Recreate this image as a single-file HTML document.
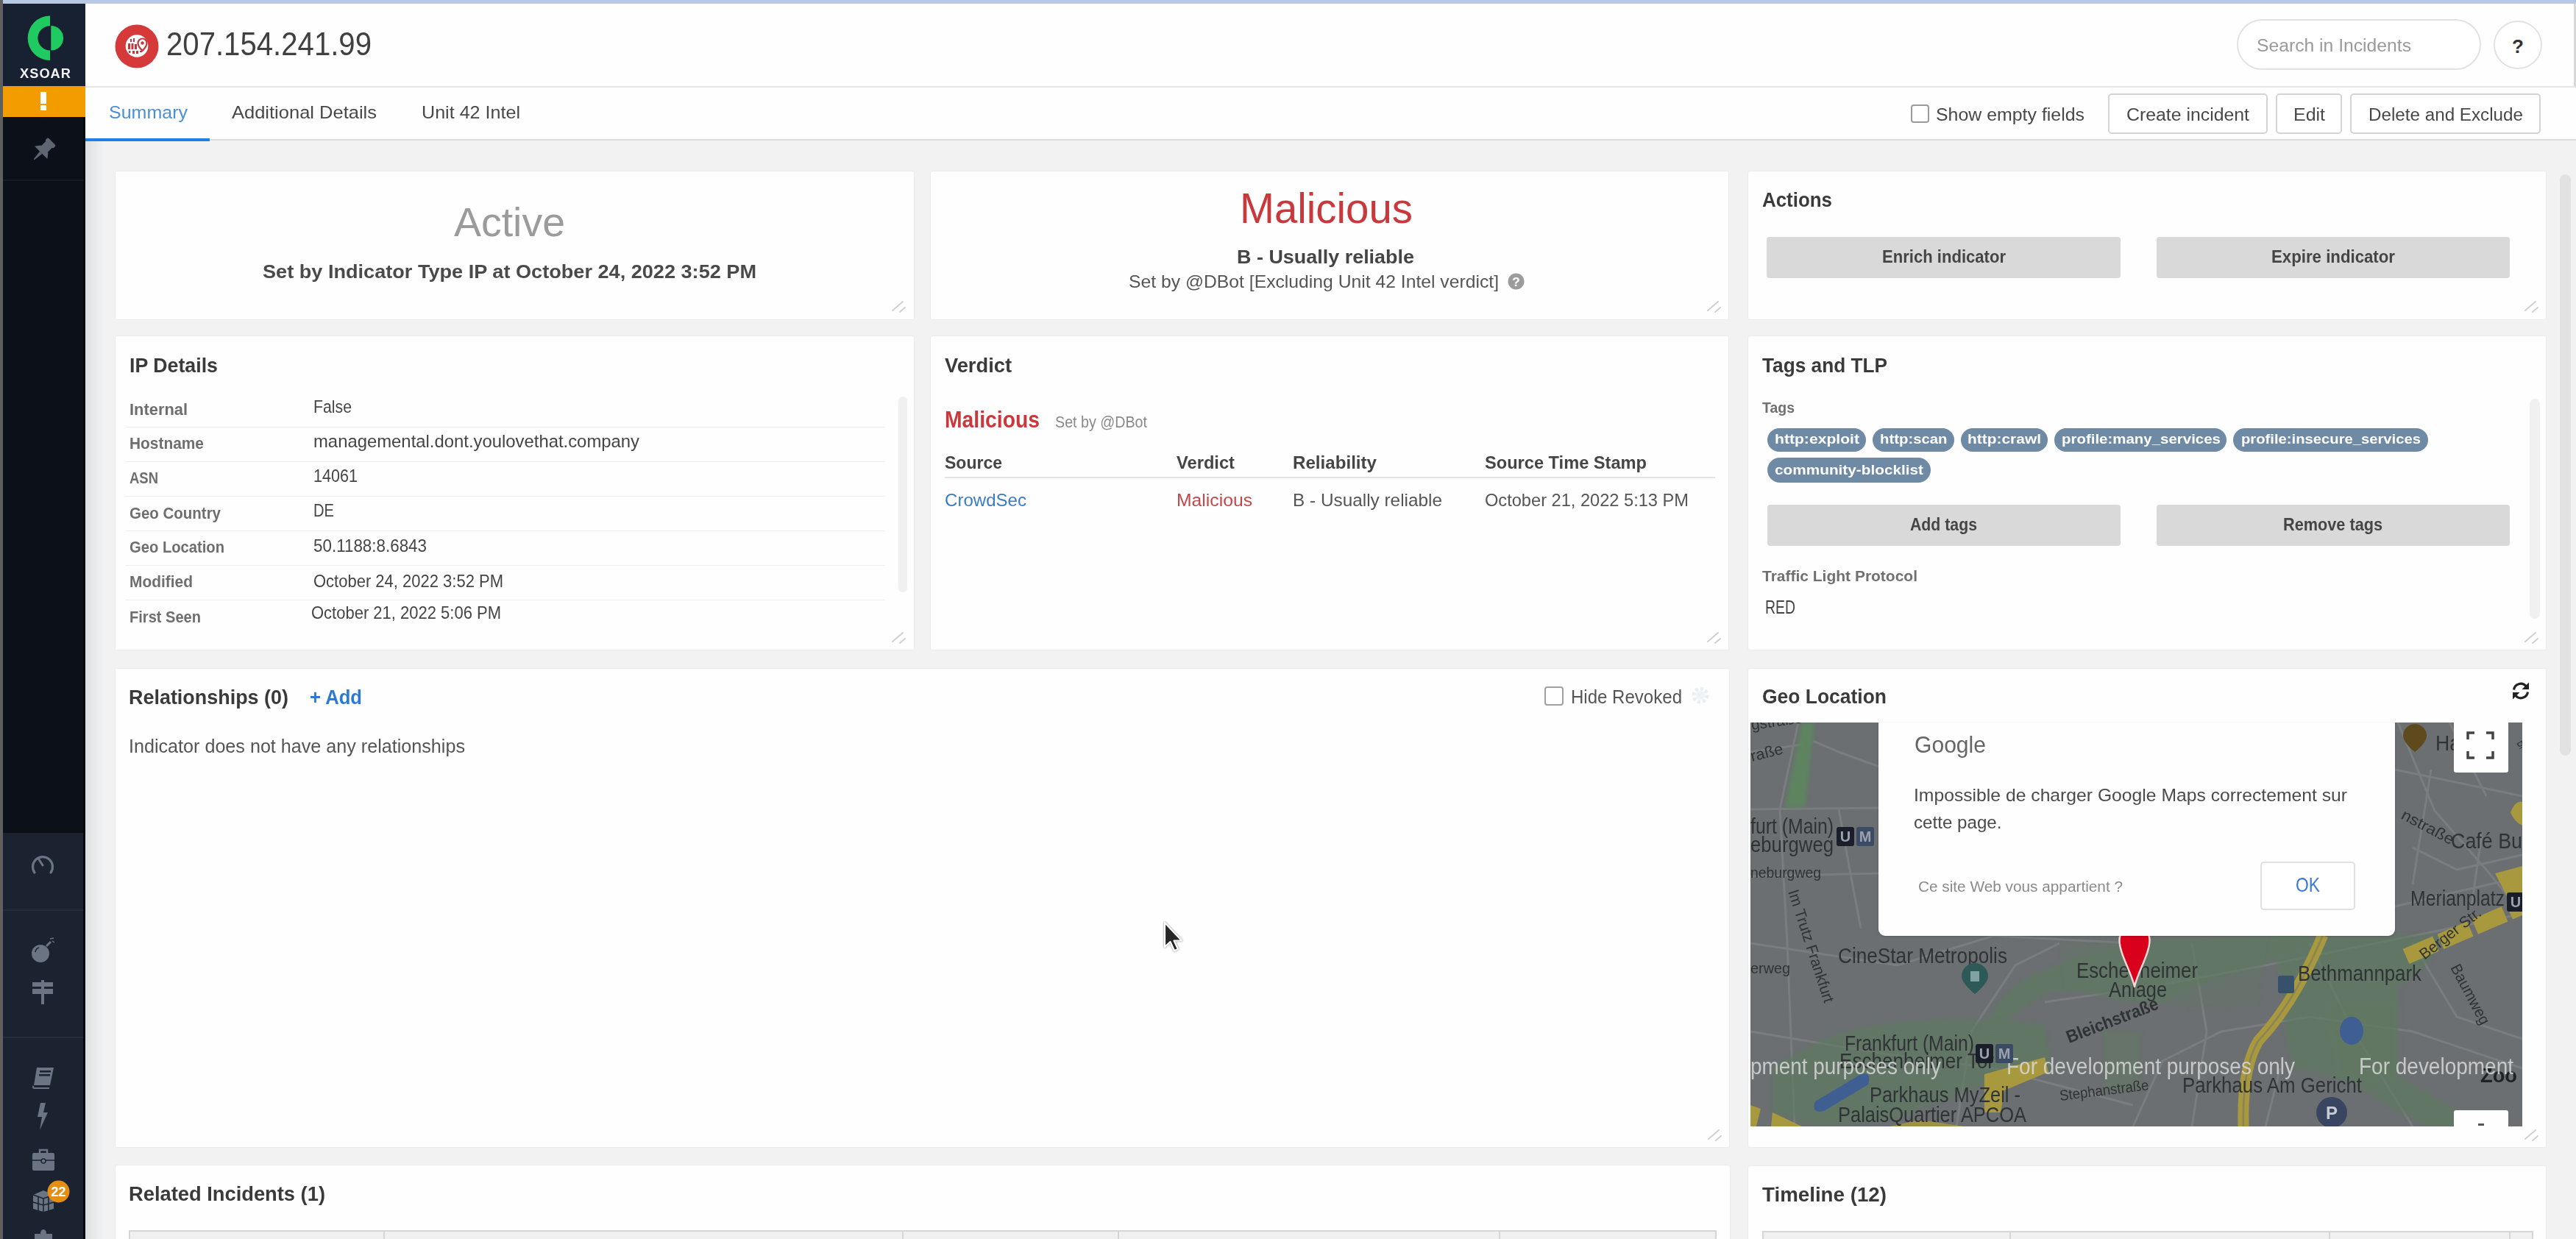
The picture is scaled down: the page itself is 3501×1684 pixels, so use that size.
<!DOCTYPE html>
<html><head><meta charset="utf-8">
<style>
html,body{margin:0;padding:0;}
body{width:3501px;height:1684px;overflow:hidden;position:relative;background:#f2f2f2;font-family:"Liberation Sans",sans-serif;}
.a{position:absolute;}
.tx{position:absolute;white-space:nowrap;line-height:1;transform-origin:0 0;font-family:"Liberation Sans",sans-serif;}
.card{position:absolute;background:#fefefe;border:1px solid #ececec;box-sizing:border-box;border-radius:3px;}
.btn{position:absolute;background:#fff;border:2px solid #d4d4d4;box-sizing:border-box;border-radius:5px;}
.gbtn{position:absolute;background:#d9d9d9;border-radius:4px;}
.pill{position:absolute;background:#6f8aa5;border-radius:17px;color:#fff;font-weight:700;white-space:nowrap;line-height:1;}
.rh{position:absolute;width:14px;height:14px;}
.sep{position:absolute;height:1px;background:#efefef;}
</style></head><body>
<!-- frame -->
<div class="a" style="left:0;top:0;width:4px;height:1684px;background:#5f5f5f"></div>
<div class="a" style="left:4px;top:0;width:3497px;height:5px;background:#b7c8e2"></div>
<!-- sidebar -->
<div class="a" style="left:4px;top:5px;width:112px;height:112px;background:#172131"></div>
<div class="a" style="left:4px;top:117px;width:112px;height:42px;background:#f29c00"></div>
<div class="a" style="left:4px;top:159px;width:112px;height:973px;background:#0c1119"></div>
<div class="a" style="left:4px;top:244px;width:112px;height:2px;background:#161c26"></div>
<div class="a" style="left:4px;top:1132px;width:112px;height:552px;background:#1b2331"></div>
<div class="a" style="left:4px;top:1236px;width:112px;height:2px;background:#252d3b"></div>
<div class="a" style="left:4px;top:1409px;width:112px;height:2px;background:#252d3b"></div>
<div class="a" style="left:116px;top:191px;width:24px;height:1493px;background:linear-gradient(to right,#dcdfe2,#f2f2f2)"></div>
<div class="a" style="left:113px;top:159px;width:3px;height:1525px;background:#05080c"></div>
<!-- header -->
<div class="a" style="left:116px;top:5px;width:3383px;height:112px;background:#fefefe"></div>
<div class="a" style="left:3498px;top:5px;width:3px;height:113px;background:#d8d8d8"></div>
<div class="a" style="left:116px;top:117px;width:3385px;height:2px;background:#e6e6e6"></div>
<div class="a" style="left:116px;top:119px;width:3385px;height:70px;background:#fefefe"></div>
<div class="a" style="left:116px;top:189px;width:3385px;height:2px;background:#dcdcdc"></div>
<div class="a" style="left:116px;top:188px;width:169px;height:4px;background:#1d80e2"></div>
<!-- search -->
<div class="a" style="left:3040px;top:26px;width:332px;height:69px;border:2px solid #e2e2e2;border-radius:36px;box-sizing:border-box;background:#fff"></div>
<div class="a" style="left:3389px;top:28px;width:66px;height:66px;border:2px solid #e2e2e2;border-radius:50%;box-sizing:border-box;background:#fff"></div>
<!-- checkbox show empty -->
<div class="a" style="left:2597px;top:142px;width:25px;height:25px;border:2px solid #9a9a9a;border-radius:4px;box-sizing:border-box;background:#fff"></div>
<div class="btn" style="left:2865px;top:127px;width:217px;height:55px"></div>
<div class="btn" style="left:3093px;top:127px;width:90px;height:55px"></div>
<div class="btn" style="left:3194px;top:127px;width:259px;height:55px"></div>
<!-- page scrollbar -->
<div class="a" style="left:3479px;top:237px;width:15px;height:790px;background:#e2e2e2;border-radius:8px"></div>
<!-- cards -->
<div class="card" style="left:156px;top:232px;width:1087px;height:203px"></div>
<div class="card" style="left:1264px;top:232px;width:1086px;height:203px"></div>
<div class="card" style="left:2375px;top:232px;width:1086px;height:203px"></div>
<div class="card" style="left:156px;top:456px;width:1087px;height:428px"></div>
<div class="card" style="left:1264px;top:456px;width:1086px;height:428px"></div>
<div class="card" style="left:2375px;top:456px;width:1086px;height:428px"></div>
<div class="card" style="left:156px;top:908px;width:2195px;height:652px"></div>
<div class="card" style="left:2375px;top:908px;width:1086px;height:652px"></div>
<div class="card" style="left:156px;top:1583px;width:2196px;height:120px"></div>
<div class="card" style="left:2375px;top:1584px;width:1086px;height:120px"></div>
<!-- action buttons -->
<div class="gbtn" style="left:2401px;top:322px;width:481px;height:56px"></div>
<div class="gbtn" style="left:2931px;top:322px;width:480px;height:56px"></div>
<div class="gbtn" style="left:2402px;top:686px;width:480px;height:56px"></div>
<div class="gbtn" style="left:2931px;top:686px;width:480px;height:56px"></div>
<!-- ip details separators -->
<div class="sep" style="left:170px;top:580px;width:1033px"></div>
<div class="sep" style="left:170px;top:627px;width:1033px"></div>
<div class="sep" style="left:170px;top:674px;width:1033px"></div>
<div class="sep" style="left:170px;top:721px;width:1033px"></div>
<div class="sep" style="left:170px;top:768px;width:1033px"></div>
<div class="sep" style="left:170px;top:815px;width:1033px"></div>
<div class="a" style="left:1221px;top:539px;width:12px;height:266px;background:#f0f0f0;border-radius:6px"></div>
<!-- verdict table line -->
<div class="a" style="left:1284px;top:648px;width:1047px;height:2px;background:#e4e4e4"></div>
<!-- tags scrollbar -->
<div class="a" style="left:3438px;top:542px;width:14px;height:299px;background:#f0f0f0;border-radius:7px"></div>
<!-- relationships checkbox -->
<div class="a" style="left:2099px;top:933px;width:26px;height:26px;border:2px solid #a0a0a0;border-radius:4px;box-sizing:border-box;background:#fff"></div>
<div class="a" style="left:55px;top:125px;width:8px;height:16px;background:#fff"></div><div class="a" style="left:55px;top:143px;width:8px;height:7px;background:#fff"></div>
<svg class="a" style="left:30px;top:15px" width="70" height="75" viewBox="0 0 70 75">
<path d="M38 6.5 A30.3 30.3 0 0 0 38 67.1 L38 53.4 A16.6 16.6 0 0 1 38 20.2 Z" fill="#1fcb60"/>
<path d="M39.3 20 A16.8 16.8 0 0 1 39.3 53.6 Z" fill="#1fcb60"/>
</svg>
<svg class="a" style="left:156px;top:33px" width="60" height="60" viewBox="0 0 60 60">
<circle cx="30" cy="30" r="29.5" fill="#d5393a"/>
<circle cx="30" cy="29.5" r="15.3" fill="#fff"/>
<g fill="#c9363a">
<rect x="18" y="26" width="3" height="8"/><rect x="22.5" y="26" width="3" height="8"/><rect x="27" y="27" width="3" height="7"/>
<rect x="21" y="20" width="2" height="4"/><rect x="25" y="19" width="2" height="5"/>
<rect x="19" y="36" width="2.5" height="3"/><rect x="24" y="36" width="3" height="4"/><rect x="29" y="36" width="3" height="4"/><rect x="34" y="36" width="3" height="2"/>
</g>
<path d="M37.5 19.5 a6 6 0 0 1 6 6 c0 4.5 -6 10.5 -6 10.5 c0 0 -6 -6 -6 -10.5 a6 6 0 0 1 6 -6 z" fill="#fff" stroke="#c9363a" stroke-width="2.2"/>
<circle cx="37.5" cy="25.5" r="2.2" fill="#c9363a"/>
</svg>
<svg class="a" style="left:38px;top:185px" width="40" height="40" viewBox="0 0 36 36">
<g fill="#5f6672" transform="rotate(45 18 18)">
<rect x="11" y="2" width="14" height="5" rx="1.5"/>
<rect x="12.5" y="6" width="11" height="10"/>
<path d="M7 21 L11.5 15 H24.5 L29 21 Z"/>
<path d="M16 21 H20 L18.6 33 H17.4 Z"/>
</g></svg>

<svg class="a" style="left:40px;top:1158px" width="36" height="32" viewBox="0 0 36 32">
<path d="M7 28 A13.5 13.5 0 1 1 29 28" stroke="#6a7483" stroke-width="3.2" fill="none" stroke-linecap="round"/>
<path d="M12.5 9.5 L18 18" stroke="#6a7483" stroke-width="3" stroke-linecap="round"/>
</svg>
<svg class="a" style="left:40px;top:1272px" width="36" height="38" viewBox="0 0 36 38">
<circle cx="15" cy="24" r="12" fill="#6a7483"/>
<path d="M23 14 L29 8" stroke="#6a7483" stroke-width="3"/>
<path d="M28 4 L33 3 M31 7 L34 9" stroke="#6a7483" stroke-width="1.5"/>
<path d="M8 22 A7 7 0 0 1 13 16" stroke="#1b2331" stroke-width="1.5" fill="none"/>
</svg>
<svg class="a" style="left:42px;top:1332px" width="32" height="34" viewBox="0 0 32 34">
<rect x="2" y="3" width="28" height="6" fill="#6a7483"/>
<rect x="2" y="12" width="28" height="7" fill="#6a7483"/>
<rect x="14" y="0" width="4" height="33" fill="#6a7483"/>
</svg>
<svg class="a" style="left:42px;top:1449px" width="34" height="32" viewBox="0 0 34 32">
<path d="M8 2 H31 L26 26 H4 Z" fill="#6a7483"/>
<path d="M3.5 27 Q2 30 5 30 H25" stroke="#6a7483" stroke-width="2.2" fill="none"/>
<rect x="12" y="6" width="15" height="2.5" fill="#1b2331"/>
<rect x="11" y="11" width="15" height="2.5" fill="#1b2331"/>
</svg>
<svg class="a" style="left:48px;top:1498px" width="20" height="40" viewBox="0 0 20 40">
<path d="M7 1 H14 L11 14 H17 L6 38 L9 20 H3 Z" fill="#6a7483"/>
</svg>
<svg class="a" style="left:43px;top:1560px" width="32" height="32" viewBox="0 0 32 32">
<path d="M11 7 V3 H21 V7" stroke="#6a7483" stroke-width="2.5" fill="none"/>
<rect x="1" y="7" width="30" height="24" rx="2" fill="#6a7483"/>
<path d="M1 17 H31" stroke="#1b2331" stroke-width="1.5"/>
<circle cx="16" cy="18" r="3" fill="#6a7483" stroke="#1b2331" stroke-width="1.5"/>
</svg>
<svg class="a" style="left:43px;top:1616px" width="32" height="32" viewBox="0 0 32 32">
<path d="M2 8 L16 2 L30 8 V27 L16 31 L2 27 Z" fill="#6a7483"/>
<path d="M2 8 L16 13 L30 8 M16 13 V31 M2 18 L16 22 L30 18 M9 10 V29 M23 10 V29" stroke="#1b2331" stroke-width="1.6" fill="none"/>
</svg>
<svg class="a" style="left:64px;top:1604px" width="31" height="31" viewBox="0 0 31 31">
<circle cx="15.5" cy="15.5" r="15" fill="#e48f12"/>
<text x="15.5" y="22" font-family="Liberation Sans" font-size="18" font-weight="700" fill="#fff" text-anchor="middle">22</text>
</svg>
<svg class="a" style="left:45px;top:1671px" width="28" height="14" viewBox="0 0 28 14">
<path d="M2 6 H10 Q10 0 14 0 Q18 0 18 6 H26 V14 H2 Z" fill="#6a7483"/>
</svg>


<svg class="a" style="left:3408px;top:49px" width="28" height="28" viewBox="0 0 28 28">
<text x="14" y="23" font-family="Liberation Sans" font-size="26" font-weight="700" fill="#333" text-anchor="middle">?</text>
</svg>
<svg class="a" style="left:2049px;top:371px" width="23" height="23" viewBox="0 0 23 23">
<circle cx="11.5" cy="11.5" r="11" fill="#9c9c9c"/>
<text x="11.5" y="18" font-family="Liberation Sans" font-size="17" font-weight="700" fill="#fff" text-anchor="middle">?</text>
</svg>
<svg class="a" style="left:3412px;top:925px" width="28" height="28" viewBox="0 0 28 28">
<path d="M4.5 12.5 A9.5 9.5 0 0 1 21 7.5" stroke="#222" stroke-width="3.2" fill="none"/>
<path d="M25 2.5 V12 H15.5 Z" fill="#222"/>
<path d="M23.5 15.5 A9.5 9.5 0 0 1 7 20.5" stroke="#222" stroke-width="3.2" fill="none"/>
<path d="M3 25.5 V16 H12.5 Z" fill="#222"/>
</svg>
<svg class="a" style="left:2297px;top:931px" width="28" height="28" viewBox="0 0 28 28">
<circle cx="14" cy="14" r="9" fill="none" stroke="#e8eef5" stroke-width="5" stroke-dasharray="4 3"/>
<circle cx="14" cy="14" r="6" fill="#eef3f8"/>
</svg>

<svg class="a" style="left:1208px;top:400px" width="34" height="34" viewBox="0 0 34 34"><path d="M5 22 L19 10 M15 24 L22 18" stroke="#d0d0d0" stroke-width="2" stroke-linecap="round"/></svg>
<svg class="a" style="left:2316px;top:400px" width="34" height="34" viewBox="0 0 34 34"><path d="M5 22 L19 10 M15 24 L22 18" stroke="#d0d0d0" stroke-width="2" stroke-linecap="round"/></svg>
<svg class="a" style="left:3427px;top:400px" width="34" height="34" viewBox="0 0 34 34"><path d="M5 22 L19 10 M15 24 L22 18" stroke="#d0d0d0" stroke-width="2" stroke-linecap="round"/></svg>
<svg class="a" style="left:1208px;top:850px" width="34" height="34" viewBox="0 0 34 34"><path d="M5 22 L19 10 M15 24 L22 18" stroke="#d0d0d0" stroke-width="2" stroke-linecap="round"/></svg>
<svg class="a" style="left:2316px;top:850px" width="34" height="34" viewBox="0 0 34 34"><path d="M5 22 L19 10 M15 24 L22 18" stroke="#d0d0d0" stroke-width="2" stroke-linecap="round"/></svg>
<svg class="a" style="left:3427px;top:850px" width="34" height="34" viewBox="0 0 34 34"><path d="M5 22 L19 10 M15 24 L22 18" stroke="#d0d0d0" stroke-width="2" stroke-linecap="round"/></svg>
<svg class="a" style="left:2317px;top:1526px" width="34" height="34" viewBox="0 0 34 34"><path d="M5 22 L19 10 M15 24 L22 18" stroke="#d0d0d0" stroke-width="2" stroke-linecap="round"/></svg>
<svg class="a" style="left:3427px;top:1526px" width="34" height="34" viewBox="0 0 34 34"><path d="M5 22 L19 10 M15 24 L22 18" stroke="#d0d0d0" stroke-width="2" stroke-linecap="round"/></svg>

<div class="a" style="left:175px;top:1673px;width:2157px;height:11px;background:#f0f0f0"></div>
<div class="a" style="left:2395px;top:1674px;width:1047px;height:10px;background:#f0f0f0"></div>
<div class="a" style="left:175px;top:1672px;width:2157px;height:2px;background:#d6d6d6"></div>
<div class="a" style="left:175px;top:1672px;width:2px;height:14px;background:#d6d6d6"></div>
<div class="a" style="left:521px;top:1672px;width:2px;height:14px;background:#d6d6d6"></div>
<div class="a" style="left:1226px;top:1672px;width:2px;height:14px;background:#d6d6d6"></div>
<div class="a" style="left:1519px;top:1672px;width:2px;height:14px;background:#d6d6d6"></div>
<div class="a" style="left:2037px;top:1672px;width:2px;height:14px;background:#d6d6d6"></div>
<div class="a" style="left:2331px;top:1672px;width:2px;height:14px;background:#d6d6d6"></div>
<div class="a" style="left:2395px;top:1673px;width:1047px;height:2px;background:#d6d6d6"></div>
<div class="a" style="left:2395px;top:1673px;width:2px;height:14px;background:#d6d6d6"></div>
<div class="a" style="left:2731px;top:1673px;width:2px;height:14px;background:#d6d6d6"></div>
<div class="a" style="left:3165px;top:1673px;width:2px;height:14px;background:#d6d6d6"></div>
<div class="a" style="left:3410px;top:1673px;width:2px;height:14px;background:#d6d6d6"></div>
<div class="a" style="left:3441px;top:1673px;width:2px;height:14px;background:#d6d6d6"></div>

<div class="pill" style="left:2402px;top:582px;width:134px;height:32px"></div>
<div class="pill" style="left:2545px;top:582px;width:111px;height:32px"></div>
<div class="pill" style="left:2665px;top:582px;width:118px;height:32px"></div>
<div class="pill" style="left:2792px;top:582px;width:234px;height:32px"></div>
<div class="pill" style="left:3035px;top:582px;width:265px;height:32px"></div>
<div class="pill" style="left:2402px;top:622px;width:222px;height:34px"></div>
<svg class="a" style="left:2379px;top:982px" width="1049" height="549" viewBox="0 0 1049 549">
<rect width="1049" height="549" fill="#6b6f71"/>
<path d="M65 0 L40 118 L50 300 L60 549" stroke="#7a7d80" stroke-width="3" fill="none"/>
<path d="M0 118 L175 116" stroke="#7a7d80" stroke-width="3" fill="none"/>
<path d="M85 25 L120 40 L175 60" stroke="#7a7d80" stroke-width="3" fill="none"/>
<path d="M0 40 L70 30" stroke="#7a7d80" stroke-width="3" fill="none"/>
<path d="M0 209 L175 205" stroke="#7a7d80" stroke-width="3" fill="none"/>
<path d="M0 300 L200 330 L330 290 L520 300" stroke="#7a7d80" stroke-width="3" fill="none"/>
<path d="M120 118 L135 200 L150 280" stroke="#7a7d80" stroke-width="3" fill="none"/>
<path d="M0 420 L180 450 L330 470 L520 520" stroke="#7a7d80" stroke-width="3" fill="none"/>
<path d="M280 549 L300 420 L360 330 L420 300" stroke="#7a7d80" stroke-width="3" fill="none"/>
<path d="M400 380 L540 360 L700 330 L900 290 L1049 260" stroke="#7a7d80" stroke-width="3" fill="none"/>
<path d="M520 549 L560 460 L640 420 L760 400 L900 420 L1049 470" stroke="#7a7d80" stroke-width="3" fill="none"/>
<path d="M880 0 L930 120 L1000 200 L1049 260" stroke="#7a7d80" stroke-width="3" fill="none"/>
<path d="M876 64 L1049 100" stroke="#7a7d80" stroke-width="3" fill="none"/>
<path d="M925 64 L900 220" stroke="#7a7d80" stroke-width="3" fill="none"/>
<path d="M994 150 L980 250" stroke="#7a7d80" stroke-width="3" fill="none"/>
<path d="M900 300 L960 400 L1049 430" stroke="#7a7d80" stroke-width="3" fill="none"/>
<path d="M950 0 L1000 100" stroke="#7a7d80" stroke-width="3" fill="none"/>
<path d="M700 549 L720 470" stroke="#7a7d80" stroke-width="3" fill="none"/>
<path d="M600 300 L620 420 L600 549" stroke="#7a7d80" stroke-width="3" fill="none"/>
<path d="M760 300 L820 420 L900 549" stroke="#7a7d80" stroke-width="3" fill="none"/>
<path d="M876 250 L960 230 L1049 210" stroke="#7a7d80" stroke-width="3" fill="none"/>
<path d="M1049 180 L960 200 L900 170" stroke="#7a7d80" stroke-width="3" fill="none"/>
<defs><filter id="bl" x="-5%" y="-5%" width="110%" height="110%"><feGaussianBlur stdDeviation="2.5"/></filter></defs>
<g filter="url(#bl)" opacity="0.8">
<path d="M70 0 L87 0 L74 115 L47 115 Z" fill="#5a8a5c"/>
<path d="M315 420 Q330 380 370 350 Q420 325 470 312 Q520 300 560 296 L700 289 L760 289 L745 310 Q700 330 660 340 Q600 360 560 380 Q520 384 470 370 Q430 360 400 370 Q360 390 340 420 Z" fill="#5f7a60" opacity="0.8"/>
<path d="M420 300 L700 289 L690 384 Q620 390 560 384 Q500 380 430 360 Z" fill="#5f7a60" opacity="0.35"/>
<path d="M705 289 L940 289 Q930 330 880 360 L880 480 Q930 510 1000 549 L920 549 Q860 520 820 490 L740 470 Q720 420 725 360 Z" fill="#5f7a60" opacity="0.85"/>
<path d="M780 380 L880 380 L880 485 L800 485 Z" fill="#5f7a60"/>
<path d="M30 470 Q100 420 180 410 Q260 400 330 405 L400 410 L410 470 Q340 480 300 500 Q240 520 200 540 L90 549 L30 530 Z" fill="#5f7a60" opacity="0.8"/>
<path d="M480 420 L530 420 L530 500 L480 500 Z" fill="#5f7a60" opacity="0.6"/>
</g>
<ellipse cx="817" cy="419" rx="16" ry="19" fill="#3f5f92"/>
<path d="M88 515 L150 478 Q165 474 160 492 L100 528 Q82 532 88 515 Z" fill="#3f5f92"/>
<path d="M778 289 Q740 380 690 433 Q668 470 670 549" stroke="#a8983e" stroke-width="15" fill="none"/>
<path d="M778 289 Q740 380 690 433 Q668 470 670 549" stroke="#6b6f71" stroke-width="2.5" fill="none" opacity="0.5"/>
<path d="M891 318 L1049 250" stroke="#a8983e" stroke-width="22" stroke-dasharray="44 7" fill="none"/>
<path d="M1012 205 L1049 195 L1049 250 L1030 240 Z M1033 122 Q1040 105 1049 108 L1049 140 Q1038 135 1033 122 Z" fill="#a8983e"/>
<path d="M0 520 L14 525 L8 549 L0 549 Z M30 530 L70 549 L28 549 Z" fill="#a8983e"/>
<path d="M318 478 L400 455 L405 475 L345 500 L340 530 L318 530 Z" fill="#a8983e"/>
<path d="M190 549 L230 540 L290 549 Z" fill="#a8983e" opacity="0.85"/>
<text x="0.0" y="151.0" font-family="Liberation Sans" font-size="30.0" font-weight="400" fill="#2f3335" opacity="1.00" textLength="113.0" lengthAdjust="spacingAndGlyphs">furt (Main)</text>
<text x="0.0" y="176.0" font-family="Liberation Sans" font-size="30.0" font-weight="400" fill="#2f3335" opacity="1.00" textLength="113.0" lengthAdjust="spacingAndGlyphs">eburgweg</text>
<text x="0.0" y="211.0" font-family="Liberation Sans" font-size="21.0" font-weight="400" fill="#2f3335" opacity="1.00" textLength="96.0" lengthAdjust="spacingAndGlyphs">neburgweg</text>
<text x="2.0" y="53.0" font-family="Liberation Sans" font-size="21.0" font-weight="400" fill="#2f3335" opacity="1.00" textLength="45.0" lengthAdjust="spacingAndGlyphs" transform="rotate(-14.0 2.0 53.0)">raße</text>
<text x="2.0" y="10.0" font-family="Liberation Sans" font-size="21.0" font-weight="400" fill="#2f3335" opacity="1.00" textLength="70.0" lengthAdjust="spacingAndGlyphs" transform="rotate(-8.0 2.0 10.0)">gstraße</text>
<text x="0.0" y="341.0" font-family="Liberation Sans" font-size="21.0" font-weight="400" fill="#2f3335" opacity="1.00" textLength="54.0" lengthAdjust="spacingAndGlyphs">erweg</text>
<text x="51.0" y="230.0" font-family="Liberation Sans" font-size="21.0" font-weight="400" fill="#2f3335" opacity="1.00" textLength="160.0" lengthAdjust="spacingAndGlyphs" transform="rotate(72.0 51.0 230.0)">Im Trutz Frankfurt</text>
<text x="119.0" y="327.0" font-family="Liberation Sans" font-size="30.0" font-weight="400" fill="#2f3335" opacity="1.00" textLength="230.0" lengthAdjust="spacingAndGlyphs">CineStar Metropolis</text>
<text x="443.0" y="347.0" font-family="Liberation Sans" font-size="30.0" font-weight="400" fill="#2f3335" opacity="1.00" textLength="165.0" lengthAdjust="spacingAndGlyphs">Eschenheimer</text>
<text x="487.0" y="373.0" font-family="Liberation Sans" font-size="30.0" font-weight="400" fill="#2f3335" opacity="1.00" textLength="79.0" lengthAdjust="spacingAndGlyphs">Anlage</text>
<text x="433.0" y="436.0" font-family="Liberation Sans" font-size="24.0" font-weight="700" fill="#2f3335" opacity="1.00" textLength="132.0" lengthAdjust="spacingAndGlyphs" transform="rotate(-21.0 433.0 436.0)">Bleichstraße</text>
<text x="128.0" y="446.0" font-family="Liberation Sans" font-size="30.0" font-weight="400" fill="#2f3335" opacity="1.00" textLength="176.0" lengthAdjust="spacingAndGlyphs">Frankfurt (Main)</text>
<text x="121.0" y="470.0" font-family="Liberation Sans" font-size="30.0" font-weight="400" fill="#2f3335" opacity="1.00" textLength="210.0" lengthAdjust="spacingAndGlyphs">Eschenheimer Tor</text>
<text x="162.0" y="516.0" font-family="Liberation Sans" font-size="30.0" font-weight="400" fill="#2f3335" opacity="1.00" textLength="205.0" lengthAdjust="spacingAndGlyphs">Parkhaus MyZeil -</text>
<text x="119.0" y="543.0" font-family="Liberation Sans" font-size="30.0" font-weight="400" fill="#2f3335" opacity="1.00" textLength="256.0" lengthAdjust="spacingAndGlyphs">PalaisQuartier APCOA</text>
<text x="421.0" y="514.0" font-family="Liberation Sans" font-size="20.0" font-weight="400" fill="#2f3335" opacity="1.00" textLength="122.0" lengthAdjust="spacingAndGlyphs" transform="rotate(-7.0 421.0 514.0)">Stephanstraße</text>
<text x="587.0" y="503.0" font-family="Liberation Sans" font-size="30.0" font-weight="400" fill="#2f3335" opacity="1.00" textLength="244.0" lengthAdjust="spacingAndGlyphs">Parkhaus Am Gericht</text>
<text x="744.0" y="351.0" font-family="Liberation Sans" font-size="30.0" font-weight="400" fill="#2f3335" opacity="1.00" textLength="168.0" lengthAdjust="spacingAndGlyphs">Bethmannpark</text>
<text x="897.0" y="249.0" font-family="Liberation Sans" font-size="30.0" font-weight="400" fill="#2f3335" opacity="1.00" textLength="128.0" lengthAdjust="spacingAndGlyphs">Merianplatz</text>
<text x="952.0" y="171.0" font-family="Liberation Sans" font-size="30.0" font-weight="400" fill="#2f3335" opacity="1.00" textLength="97.0" lengthAdjust="spacingAndGlyphs">Café Bu</text>
<text x="883.0" y="130.0" font-family="Liberation Sans" font-size="21.0" font-weight="400" fill="#2f3335" opacity="1.00" textLength="78.0" lengthAdjust="spacingAndGlyphs" transform="rotate(28.0 883.0 130.0)">nstraße</text>
<text x="916.0" y="323.0" font-family="Liberation Sans" font-size="21.0" font-weight="400" fill="#2f3335" opacity="1.00" textLength="100.0" lengthAdjust="spacingAndGlyphs" transform="rotate(-38.0 916.0 323.0)">Berger Str.</text>
<text x="951.0" y="333.0" font-family="Liberation Sans" font-size="21.0" font-weight="400" fill="#2f3335" opacity="1.00" textLength="90.0" lengthAdjust="spacingAndGlyphs" transform="rotate(62.0 951.0 333.0)">Baumweg</text>
<text x="992.0" y="489.0" font-family="Liberation Sans" font-size="28.0" font-weight="700" fill="#1f2224" opacity="1.00" textLength="50.0" lengthAdjust="spacingAndGlyphs">Zoo</text>
<text x="931.0" y="38.0" font-family="Liberation Sans" font-size="30.0" font-weight="400" fill="#2f3335" opacity="1.00" textLength="34.0" lengthAdjust="spacingAndGlyphs">Ha</text>
<text x="1041.0" y="28.0" font-family="Liberation Sans" font-size="20.0" font-weight="400" fill="#2f3335" opacity="1.00" textLength="10.0" lengthAdjust="spacingAndGlyphs" transform="rotate(60.0 1041.0 28.0)">Bi</text>
<text x="0.0" y="478.0" font-family="Liberation Sans" font-size="31.0" font-weight="400" fill="#d9d9d9" opacity="0.85" textLength="259.0" lengthAdjust="spacingAndGlyphs">pment purposes only</text>
<text x="348.0" y="478.0" font-family="Liberation Sans" font-size="31.0" font-weight="400" fill="#d9d9d9" opacity="0.85" textLength="392.0" lengthAdjust="spacingAndGlyphs">For development purposes only</text>
<text x="827.0" y="478.0" font-family="Liberation Sans" font-size="31.0" font-weight="400" fill="#d9d9d9" opacity="0.85" textLength="210.0" lengthAdjust="spacingAndGlyphs">For development</text>
<rect x="117.0" y="142.0" width="24" height="26" rx="3" fill="#1a1e2a"/>
<text x="129.0" y="162.0" font-family="Liberation Sans" font-size="20" font-weight="700" fill="#9aa2ad" text-anchor="middle">U</text>
<rect x="144.0" y="142.0" width="24" height="26" rx="3" fill="#3b4b63"/>
<text x="156.0" y="162.0" font-family="Liberation Sans" font-size="20" font-weight="700" fill="#9aa2ad" text-anchor="middle">M</text>
<rect x="306.0" y="437.0" width="24" height="26" rx="3" fill="#1a1e2a"/>
<text x="318.0" y="457.0" font-family="Liberation Sans" font-size="20" font-weight="700" fill="#9aa2ad" text-anchor="middle">U</text>
<rect x="333.0" y="437.0" width="24" height="26" rx="3" fill="#3b4b63"/>
<text x="345.0" y="457.0" font-family="Liberation Sans" font-size="20" font-weight="700" fill="#9aa2ad" text-anchor="middle">M</text>
<rect x="1028.0" y="231.0" width="24" height="26" rx="3" fill="#1a1e2a"/>
<text x="1040.0" y="251.0" font-family="Liberation Sans" font-size="20" font-weight="700" fill="#9aa2ad" text-anchor="middle">U</text>
<path d="M305.0 345.0 m-18 0 a18 18 0 1 1 36 0 c0 10 -18 24 -18 24 c0 0 -18 -14 -18 -24 z" fill="#2d5a58"/>
<rect x="299.0" y="338.0" width="12" height="14" fill="#7fa3a0"/>
<path d="M903.0 18.0 m-16 0 a16 16 0 1 1 32 0 c0 10 -16 22 -16 22 c0 0 -16 -12 -16 -22 z" fill="#5f4a1e"/>
<circle cx="790.0" cy="530.0" r="21" fill="#3a4561"/>
<text x="790.0" y="539.0" font-family="Liberation Sans" font-size="24" font-weight="700" fill="#c8ccd4" text-anchor="middle">P</text>
<rect x="717.0" y="344.0" width="22" height="24" rx="3" fill="#37506c"/>
</svg>
<svg class="a" style="left:2874px;top:1240px" width="54" height="106" viewBox="0 0 54 106"><path d="M27 101 C23 82 6.5 56 6.5 38 A20.5 20.5 0 1 1 47.5 38 C47.5 56 31 82 27 101 Z" fill="#d8001b" stroke="#f6d6d6" stroke-width="2.5" stroke-linejoin="round"/></svg>
<div class="a" style="left:2553px;top:982px;width:702px;height:290px;background:#fefefe;border-radius:0 0 9px 9px;box-shadow:0 1px 3px rgba(0,0,0,0.18)"></div>
<div class="a" style="left:3072px;top:1171px;width:129px;height:66px;border:2px solid #e0e0e0;border-radius:5px;box-sizing:border-box;background:#fff"></div>
<div class="a" style="left:3335px;top:982px;width:74px;height:68px;background:#fefefe;border-radius:0 0 3px 3px"></div>
<svg class="a" style="left:3352px;top:994px" width="38" height="38" viewBox="0 0 38 38"><path d="M2 11 V2 H11 M27 2 H36 V11 M36 27 V36 H27 M11 36 H2 V27" stroke="#444" stroke-width="3.5" fill="none"/></svg>
<div class="a" style="left:3335px;top:1509px;width:74px;height:22px;background:#fefefe;border-radius:3px 3px 0 0"></div>
<div class="a" style="left:3368px;top:1527px;width:8px;height:3px;background:#555"></div>
<svg class="a" style="left:1578px;top:1249px;filter:drop-shadow(0 0 1.2px rgba(0,0,0,0.55))" width="36" height="48" viewBox="0 0 36 48">
<path d="M5 5 V38 L12.5 31 L18 43 L23 41 L17.5 29.5 H28 Z" fill="#262626" stroke="#fff" stroke-width="2.2" stroke-linejoin="round"/>
</svg>
<div class="tx" style="left:226.0px;top:36.9px;font-size:45.06px;font-weight:400;color:#404040;transform:scaleX(0.8910);">207.154.241.99</div>
<div class="tx" style="left:148.0px;top:142.3px;font-size:23.26px;font-weight:400;color:#4a8fd8;transform:scaleX(1.0755);">Summary</div>
<div class="tx" style="left:315.0px;top:142.3px;font-size:23.26px;font-weight:400;color:#484848;transform:scaleX(1.0965);">Additional Details</div>
<div class="tx" style="left:573.0px;top:142.3px;font-size:23.26px;font-weight:400;color:#484848;transform:scaleX(1.0800);">Unit 42 Intel</div>
<div class="tx" style="left:3067.0px;top:50.2px;font-size:23.98px;font-weight:400;color:#9a9a9a;transform:scaleX(1.0301);">Search in Incidents</div>
<div class="tx" style="left:2631.0px;top:143.7px;font-size:23.98px;font-weight:400;color:#484848;transform:scaleX(1.0385);">Show empty fields</div>
<div class="tx" style="left:2890.0px;top:143.7px;font-size:23.98px;font-weight:400;color:#484848;transform:scaleX(1.0359);">Create incident</div>
<div class="tx" style="left:3117.0px;top:143.7px;font-size:23.98px;font-weight:400;color:#484848;transform:scaleX(1.0408);">Edit</div>
<div class="tx" style="left:3219.0px;top:143.7px;font-size:23.98px;font-weight:400;color:#484848;transform:scaleX(1.0102);">Delete and Exclude</div>
<div class="tx" style="left:617.0px;top:273.6px;font-size:55.96px;font-weight:400;color:#9b9b9b;transform:scaleX(0.9910);">Active</div>
<div class="tx" style="left:357.0px;top:355.6px;font-size:26.02px;font-weight:700;color:#4a4a4a;transform:scaleX(1.0421);">Set by Indicator Type IP at October 24, 2022 3:52 PM</div>
<div class="tx" style="left:1685.0px;top:253.8px;font-size:58.14px;font-weight:400;color:#c9383a;transform:scaleX(0.9700);">Malicious</div>
<div class="tx" style="left:1681.0px;top:337.2px;font-size:25.44px;font-weight:700;color:#454545;transform:scaleX(1.0588);">B - Usually reliable</div>
<div class="tx" style="left:1534.0px;top:370.8px;font-size:23.84px;font-weight:400;color:#555555;transform:scaleX(1.0369);">Set by @DBot [Excluding Unit 42 Intel verdict]</div>
<div class="tx" style="left:2395.0px;top:258.1px;font-size:27.62px;font-weight:700;color:#3a3a3a;transform:scaleX(0.9383);">Actions</div>
<div class="tx" style="left:2558.0px;top:336.9px;font-size:24.13px;font-weight:700;color:#454545;transform:scaleX(0.9148);">Enrich indicator</div>
<div class="tx" style="left:3087.0px;top:336.9px;font-size:24.13px;font-weight:700;color:#454545;transform:scaleX(0.9214);">Expire indicator</div>
<div class="tx" style="left:176.0px;top:483.1px;font-size:27.62px;font-weight:700;color:#3a3a3a;transform:scaleX(0.9692);">IP Details</div>
<div class="tx" style="left:176.0px;top:545.5px;font-size:21.80px;font-weight:700;color:#6e6e6e;transform:scaleX(1.0034);">Internal</div>
<div class="tx" style="left:176.0px;top:592.1px;font-size:21.80px;font-weight:700;color:#6e6e6e;transform:scaleX(0.9583);">Hostname</div>
<div class="tx" style="left:176.0px;top:639.0px;font-size:21.80px;font-weight:700;color:#6e6e6e;transform:scaleX(0.8473);">ASN</div>
<div class="tx" style="left:176.0px;top:687.0px;font-size:21.80px;font-weight:700;color:#6e6e6e;transform:scaleX(0.9394);">Geo Country</div>
<div class="tx" style="left:176.0px;top:733.0px;font-size:21.80px;font-weight:700;color:#6e6e6e;transform:scaleX(0.9263);">Geo Location</div>
<div class="tx" style="left:176.0px;top:780.0px;font-size:21.80px;font-weight:700;color:#6e6e6e;transform:scaleX(0.9599);">Modified</div>
<div class="tx" style="left:176.0px;top:828.0px;font-size:21.80px;font-weight:700;color:#6e6e6e;transform:scaleX(0.9204);">First Seen</div>
<div class="tx" style="left:426.0px;top:542.3px;font-size:23.26px;font-weight:400;color:#454545;transform:scaleX(0.9145);">False</div>
<div class="tx" style="left:426.0px;top:589.3px;font-size:23.26px;font-weight:400;color:#454545;transform:scaleX(1.0262);">managemental.dont.youlovethat.company</div>
<div class="tx" style="left:426.0px;top:636.3px;font-size:23.26px;font-weight:400;color:#454545;transform:scaleX(0.9280);">14061</div>
<div class="tx" style="left:426.0px;top:683.3px;font-size:23.26px;font-weight:400;color:#454545;transform:scaleX(0.8665);">DE</div>
<div class="tx" style="left:426.0px;top:731.3px;font-size:23.26px;font-weight:400;color:#454545;transform:scaleX(0.9632);">50.1188:8.6843</div>
<div class="tx" style="left:426.0px;top:779.3px;font-size:23.26px;font-weight:400;color:#454545;transform:scaleX(0.9460);">October 24, 2022 3:52 PM</div>
<div class="tx" style="left:423.0px;top:822.3px;font-size:23.26px;font-weight:400;color:#454545;transform:scaleX(0.9460);">October 21, 2022 5:06 PM</div>
<div class="tx" style="left:1284.0px;top:483.1px;font-size:27.62px;font-weight:700;color:#3a3a3a;transform:scaleX(0.9883);">Verdict</div>
<div class="tx" style="left:1284.0px;top:553.6px;font-size:31.98px;font-weight:700;color:#c9383a;transform:scaleX(0.8856);">Malicious</div>
<div class="tx" style="left:1434.0px;top:562.5px;font-size:21.80px;font-weight:400;color:#8a8a8a;transform:scaleX(0.9029);">Set by @DBot</div>
<div class="tx" style="left:1284.0px;top:617.6px;font-size:23.55px;font-weight:700;color:#454545;transform:scaleX(0.9771);">Source</div>
<div class="tx" style="left:1599.0px;top:617.6px;font-size:23.55px;font-weight:700;color:#454545;transform:scaleX(1.0060);">Verdict</div>
<div class="tx" style="left:1757.0px;top:617.6px;font-size:23.55px;font-weight:700;color:#454545;transform:scaleX(1.0249);">Reliability</div>
<div class="tx" style="left:2018.0px;top:617.6px;font-size:23.55px;font-weight:700;color:#454545;transform:scaleX(1.0026);">Source Time Stamp</div>
<div class="tx" style="left:1284.0px;top:667.6px;font-size:24.71px;font-weight:400;color:#3b7cc6;transform:scaleX(0.9741);">CrowdSec</div>
<div class="tx" style="left:1599.0px;top:667.6px;font-size:24.71px;font-weight:400;color:#c4484a;transform:scaleX(1.0003);">Malicious</div>
<div class="tx" style="left:1757.0px;top:667.6px;font-size:24.71px;font-weight:400;color:#555555;transform:scaleX(0.9857);">B - Usually reliable</div>
<div class="tx" style="left:2018.0px;top:667.6px;font-size:24.71px;font-weight:400;color:#555555;transform:scaleX(0.9559);">October 21, 2022 5:13 PM</div>
<div class="tx" style="left:2395.0px;top:483.1px;font-size:27.62px;font-weight:700;color:#3a3a3a;transform:scaleX(0.9499);">Tags and TLP</div>
<div class="tx" style="left:2395.0px;top:543.8px;font-size:20.93px;font-weight:700;color:#707070;transform:scaleX(0.9306);">Tags</div>
<div class="tx" style="left:2596.0px;top:700.6px;font-size:24.13px;font-weight:700;color:#454545;transform:scaleX(0.8818);">Add tags</div>
<div class="tx" style="left:3103.0px;top:700.6px;font-size:24.13px;font-weight:700;color:#454545;transform:scaleX(0.8990);">Remove tags</div>
<div class="tx" style="left:2395.0px;top:773.3px;font-size:20.93px;font-weight:700;color:#707070;transform:scaleX(1.0029);">Traffic Light Protocol</div>
<div class="tx" style="left:2399.0px;top:812.7px;font-size:25.15px;font-weight:400;color:#454545;transform:scaleX(0.7722);">RED</div>
<div class="tx" style="left:175.0px;top:934.1px;font-size:27.62px;font-weight:700;color:#3a3a3a;transform:scaleX(0.9755);">Relationships (0)</div>
<div class="tx" style="left:421.0px;top:934.1px;font-size:27.62px;font-weight:700;color:#2a7ad5;transform:scaleX(0.9287);">+ Add</div>
<div class="tx" style="left:175.0px;top:1002.7px;font-size:24.85px;font-weight:400;color:#555555;transform:scaleX(1.0119);">Indicator does not have any relationships</div>
<div class="tx" style="left:2135.0px;top:935.1px;font-size:25.15px;font-weight:400;color:#555555;transform:scaleX(0.9562);">Hide Revoked</div>
<div class="tx" style="left:2395.0px;top:933.1px;font-size:27.62px;font-weight:700;color:#3a3a3a;transform:scaleX(0.9580);">Geo Location</div>
<div class="tx" style="left:175.0px;top:1609.1px;font-size:27.62px;font-weight:700;color:#3a3a3a;transform:scaleX(0.9888);">Related Incidents (1)</div>
<div class="tx" style="left:2395.0px;top:1610.1px;font-size:27.62px;font-weight:700;color:#3a3a3a;transform:scaleX(1.0043);">Timeline (12)</div>
<div class="tx" style="left:2412.0px;top:588.0px;font-size:18.90px;font-weight:700;color:#ffffff;transform:scaleX(1.1182);">http:exploit</div>
<div class="tx" style="left:2555.0px;top:588.0px;font-size:18.90px;font-weight:700;color:#ffffff;transform:scaleX(1.0763);">http:scan</div>
<div class="tx" style="left:2674.0px;top:588.0px;font-size:18.90px;font-weight:700;color:#ffffff;transform:scaleX(1.1078);">http:crawl</div>
<div class="tx" style="left:2802.0px;top:588.0px;font-size:18.90px;font-weight:700;color:#ffffff;transform:scaleX(1.0826);">profile:many_services</div>
<div class="tx" style="left:3046.0px;top:588.0px;font-size:18.90px;font-weight:700;color:#ffffff;transform:scaleX(1.0708);">profile:insecure_services</div>
<div class="tx" style="left:2412.0px;top:629.5px;font-size:18.90px;font-weight:700;color:#ffffff;transform:scaleX(1.0997);">community-blocklist</div>
<div class="tx" style="left:26.5px;top:91.8px;font-size:17.44px;font-weight:700;color:#f2f2f2;transform:scaleX(1.0445);letter-spacing:1px;">XSOAR</div>
<div class="tx" style="left:2601.5px;top:996.7px;font-size:30.52px;font-weight:400;color:#656565;transform:scaleX(0.9857);">Google</div>
<div class="tx" style="left:2601.0px;top:1069.0px;font-size:24.27px;font-weight:400;color:#4a4a4a;transform:scaleX(1.0180);">Impossible de charger Google Maps correctement sur</div>
<div class="tx" style="left:2601.0px;top:1106.3px;font-size:24.27px;font-weight:400;color:#4a4a4a;transform:scaleX(0.9952);">cette page.</div>
<div class="tx" style="left:2607.0px;top:1193.7px;font-size:21.08px;font-weight:400;color:#8a8a8a;transform:scaleX(0.9859);">Ce site Web vous appartient ?</div>
<div class="tx" style="left:3120.0px;top:1189.7px;font-size:26.89px;font-weight:400;color:#3b78d8;transform:scaleX(0.8496);">OK</div>
</body></html>
